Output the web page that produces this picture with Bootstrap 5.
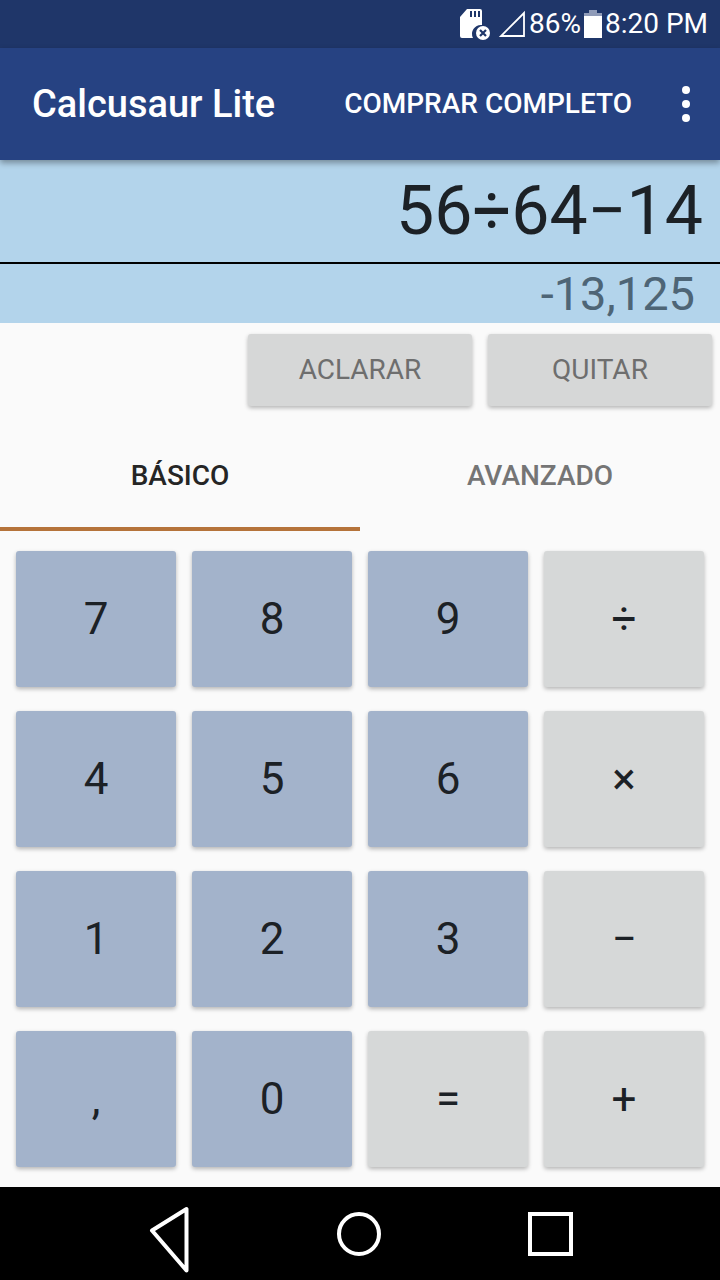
<!DOCTYPE html>
<html lang="es">

<head>
    <meta charset="UTF-8">
    <meta name="viewport" content="width=device-width, initial-scale=1.0">
    <title>Calcusaur Lite</title>
    <link href="https://cdn.jsdelivr.net/npm/bootstrap@5.3.3/dist/css/bootstrap.min.css" rel="stylesheet">
    <style>
        body { width: 720px; height: 1280px; overflow: hidden; background: #fafafa; font-family: Roboto, sans-serif; }
        .status-bar { height: 48px; background: #1f3669; color: #fff; font-size: 28px; padding-right: 12px; gap: 3px; }
        .app-bar { height: 112px; background: #264282; color: #fff; padding: 0 32px; box-shadow: 0 3px 6px rgba(0,0,0,.35); position: relative; z-index: 2; }
        .app-title { font-size: 38px; font-weight: 500; line-height: 1; margin: 0; color: #fff; padding: 0; }
        .app-action { font-size: 28px; font-weight: 500; margin-left: auto; color: #fff; }
        .app-menu { margin-left: 50px; margin-right: -2px; gap: 6px; }
        .app-menu span { width: 8px; height: 8px; border-radius: 50%; background: #fff; display: block; }
        .expr { height: 102px; background: #b3d4eb; color: #1c2126; font-size: 68px; padding: 0 17px 0 0; line-height: 1; }
        .divider-line { height: 2px; background: #000; }
        .result { height: 59px; background: #b3d4eb; color: #4e6576; font-size: 47px; padding: 0 25px 0 0; line-height: 1; }
        .tool-row { padding: 11px 8px 0 0; gap: 16px; }
        .tool-btn { width: 224px; height: 72px; background: #d6d7d7; color: #6e6e6e; font-size: 28px; padding: 0; border: 0; border-radius: 3px; box-shadow: 0 2px 4px rgba(0,0,0,.28); }
        .tab-row { margin-top: 21px; height: 104px; }
        .tab-item { width: 360px; height: 104px; font-size: 28px; font-weight: 500; color: #757575; padding-bottom: 6px; }
        .tab-item.is-active { color: #252525; border-bottom: 4px solid #b5733a; padding-bottom: 2px; }
        .keypad { display: grid; grid-template-columns: repeat(4, 160px); grid-auto-rows: 136px; column-gap: 16px; row-gap: 24px; padding: 20px 16px 0; }
        .key { font-size: 44px; line-height: 1; color: #1c2126; padding: 0; border: 0; border-radius: 3px; box-shadow: 0 2px 4px rgba(0,0,0,.28); }
        .key-num { background: #a3b3cb; }
        .key-op { background: #d6d8d8; }
        .nav-bar { position: absolute; left: 0; right: 0; top: 1187px; height: 93px; background: #000; }
    </style>
</head>

<body class="position-relative">

    <!-- Status bar -->
    <div class="status-bar d-flex align-items-center justify-content-end">
        <svg width="32" height="32" viewBox="0 0 32 32">
            <path fill="#fff" d="M8 1h13a2 2 0 0 1 2 2v14a9 9 0 0 0-9 13H3a2 2 0 0 1-2-2V9z" />
            <path fill="#1f3669" d="M11 3h2v6h-2zM15 3h2v6h-2zM19 3h2v6h-2z" />
            <circle cx="24" cy="25" r="7" fill="#fff" />
            <path stroke="#1f3669" stroke-width="2.2" d="M21 22l6 6M27 22l-6 6" />
        </svg>
        <svg width="28" height="28" viewBox="0 0 28 28" class="ms-1">
            <path fill="none" stroke="#fff" stroke-width="1.8" d="M26 3v23H3z" />
        </svg>
        <span>86%</span>
        <svg width="18" height="28" viewBox="0 0 18 28">
            <path fill="#8f9bb8" d="M5 0h8v3h5v4H0V3h5z" />
            <path fill="#fff" d="M0 6h18v22H0z" />
        </svg>
        <span>8:20 PM</span>
    </div>

    <!-- App bar -->
    <nav class="navbar app-bar d-flex align-items-center flex-nowrap">
        <span class="navbar-brand app-title">Calcusaur Lite</span>
        <span class="app-action">COMPRAR COMPLETO</span>
        <div class="app-menu d-flex flex-column">
            <span></span><span></span><span></span>
        </div>
    </nav>

    <!-- Display -->
    <div class="expr d-flex align-items-center justify-content-end">56÷64−14</div>
    <div class="divider-line"></div>
    <div class="result d-flex align-items-center justify-content-end">-13,125</div>

    <div class="tool-row d-flex justify-content-end">
        <button type="button" class="btn tool-btn">ACLARAR</button>
        <button type="button" class="btn tool-btn">QUITAR</button>
    </div>

    <!-- Tabs -->
    <div class="tab-row d-flex">
        <div class="tab-item is-active d-flex align-items-center justify-content-center">BÁSICO</div>
        <div class="tab-item d-flex align-items-center justify-content-center">AVANZADO</div>
    </div>

    <!-- Keypad -->
    <div class="keypad" id="keypad"></div>

    <!-- Android nav -->
    <div class="nav-bar">
        <svg width="720" height="93" viewBox="0 0 720 93" fill="none" stroke="#fff" stroke-width="4" class="d-block">
            <path stroke-linejoin="round" d="M186.500 25v61.500L152 46.500z" transform="translate(0 -3)" />
            <circle cx="359" cy="47" r="20" />
            <rect x="530" y="27" width="41" height="40" />
        </svg>
    </div>

    <script src="https://cdn.jsdelivr.net/npm/bootstrap@5.3.3/dist/js/bootstrap.bundle.min.js"></script>

    <script>
        // Keys in reading order, op marks the grey ones
        const keys = [
            ['7'], ['8'], ['9'], ['÷', true],
            ['4'], ['5'], ['6'], ['×', true],
            ['1'], ['2'], ['3'], ['−', true],
            [','], ['0'], ['=', true], ['+', true]
        ];

        const keypad = document.getElementById('keypad');
        keys.forEach(k => {
            const b = document.createElement('button');
            b.type = 'button';
            b.className = 'btn key ' + (k[1] ? 'key-op' : 'key-num');
            b.textContent = k[0];
            keypad.appendChild(b);
        });
    </script>

</body>

</html>
